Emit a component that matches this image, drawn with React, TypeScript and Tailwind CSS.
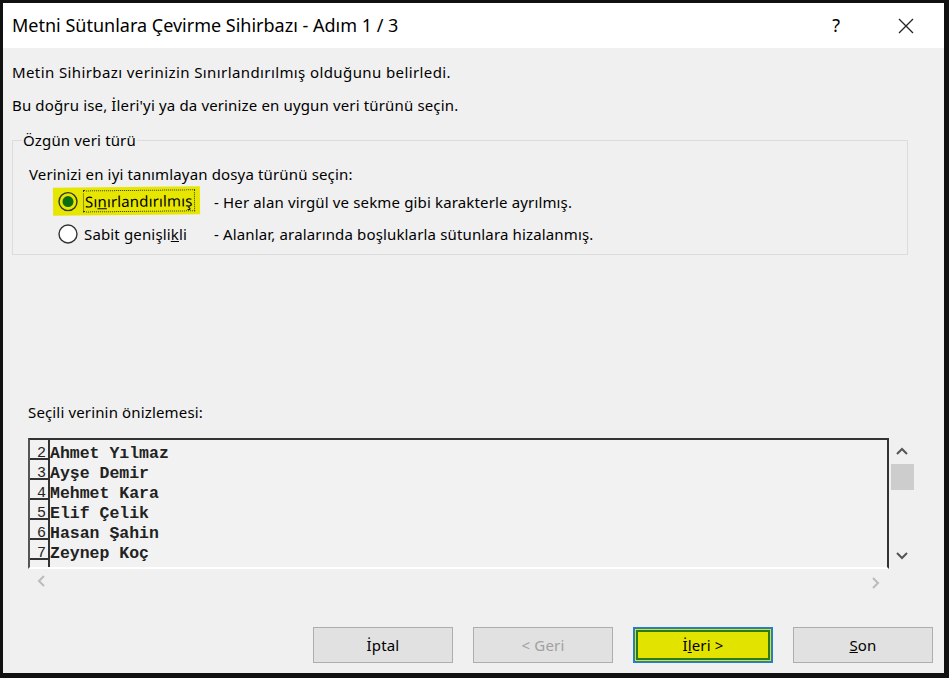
import React from "react";

const ui = { fontFamily: '"Noto Sans", "Open Sans", sans-serif' };
const mono = { fontFamily: '"Liberation Mono", "DejaVu Sans Mono", monospace' };

const rows = [
  { n: 2, name: "Ahmet Yılmaz" },
  { n: 3, name: "Ayşe Demir" },
  { n: 4, name: "Mehmet Kara" },
  { n: 5, name: "Elif Çelik" },
  { n: 6, name: "Hasan Şahin" },
  { n: 7, name: "Zeynep Koç" },
];

function Radio({ checked }: { checked?: boolean }) {
  return (
    <svg width="20" height="20" viewBox="0 0 20 20" className="shrink-0">
      <circle cx="10" cy="10" r="9" fill={checked ? "none" : "#fff"} stroke="#333" strokeWidth="1.4" />
      {checked && <circle cx="10" cy="10" r="5.5" fill="#0b6b12" />}
    </svg>
  );
}

function Chevron({ dir, color }: { dir: "up" | "down" | "left" | "right"; color: string }) {
  const d = {
    up: "M3 10 L8 5 L13 10",
    down: "M3 6 L8 11 L13 6",
    left: "M10 3 L5 8 L10 13",
    right: "M6 3 L11 8 L6 13",
  }[dir];
  return (
    <svg width="16" height="16" viewBox="0 0 16 16" className="shrink-0">
      <path d={d} fill="none" stroke={color} strokeWidth="2" />
    </svg>
  );
}

function Button({ children, disabled, focused }: { children: React.ReactNode; disabled?: boolean; focused?: boolean }) {
  if (focused) {
    return (
      <div className="w-[140px] h-[36px] shrink-0 bg-[#e3e300] border-2 border-[#1e7fd8] p-px">
        <div className="w-full h-full border-2 border-[#2c7a1a] flex items-center justify-center text-[15px] text-black">
          {children}
        </div>
      </div>
    );
  }
  return (
    <div
      className={`w-[140px] h-[36px] shrink-0 bg-[#e1e1e1] border border-[#adadad] flex items-center justify-center text-[15px] ${
        disabled ? "text-[#a0a0a0]" : "text-black"
      }`}
    >
      {children}
    </div>
  );
}

export default function App() {
  return (
    <div className="w-[949px] h-[678px] bg-[#111] pl-[3px] pt-[3px] pr-[5px] pb-[5px]" style={ui}>
      <div className="w-full h-full flex flex-col bg-[#f0f0f0]">
        {/* title bar */}
        <div className="h-[45px] bg-white flex items-center pl-[9px] text-[18px] text-black shrink-0">
          <span className="tracking-normal">Metni Sütunlara Çevirme Sihirbazı - Adım 1 / 3</span>
          <span className="ml-auto mr-[58px] text-[18px]">?</span>
          <svg width="16" height="16" viewBox="0 0 16 16" className="mr-[30px]">
            <path d="M1 1 L15 15 M15 1 L1 15" stroke="#222" strokeWidth="1.3" />
          </svg>
        </div>

        <div className="flex-1 flex flex-col pl-[9px] pr-[20px] text-[15px] tracking-[0.15px] text-black">
          <p className="mt-[13px] leading-[22px] tracking-[0.4px]">Metin Sihirbazı verinizin Sınırlandırılmış olduğunu belirledi.</p>
          <p className="mt-[11px] leading-[22px]">Bu doğru ise, İleri'yi ya da verinize en uygun veri türünü seçin.</p>

          {/* group box */}
          <div className="relative mt-[24px] mr-[16px] h-[115px] border border-[#dcdcdc] pl-[16px] pt-[22px]">
            <span className="absolute left-[9px] top-[-12px] bg-[#f0f0f0] px-px leading-[22px]">Özgün veri türü</span>
            <p className="leading-[22px]">Verinizi en iyi tanımlayan dosya türünü seçin:</p>
            <div className="flex items-center mt-[3px] h-[28px]">
              <div className="w-[161px] ml-[24px] shrink-0">
                <div className="inline-flex items-center bg-[#e6e600] h-[28px] pl-[5px] pr-[5px] -rotate-[0.6deg]">
                  <Radio checked />
                  <span className="ml-[5px] border border-dotted border-[#333] px-px leading-[20px]">
                    Sı<span className="underline">n</span>ırlandırılmış
                  </span>
                </div>
              </div>
              <span>- Her alan virgül ve sekme gibi karakterle ayrılmış.</span>
            </div>
            <div className="flex items-center mt-[4px] h-[28px]">
              <div className="w-[161px] ml-[24px] shrink-0 flex items-center pl-[5px]">
                <Radio />
                <span className="ml-[6px] leading-[20px]">
                  Sabit genişli<span className="underline">k</span>li
                </span>
              </div>
              <span>- Alanlar, aralarında boşluklarla sütunlara hizalanmış.</span>
            </div>
          </div>

          <p className="mt-[146px] ml-[16px] leading-[22px]">Seçili verinin önizlemesi:</p>

          {/* preview */}
          <div className="mt-[15px] ml-[16px] flex">
            <div className="w-[861px] h-[131px] shrink-0 border-t-2 border-l-2 border-t-[#333] border-l-[#555] border-r-2 border-r-[#333] border-b-2 border-b-white bg-[#f2f2f2] overflow-hidden">
              {[...rows, { n: 8, name: "" }].map((r) => (
                <div key={r.n} className="flex h-[20px]" style={mono}>
                  <div className="w-[20px] h-[20px] shrink-0 border-r-2 border-b-2 border-[#333] text-[15px] tracking-normal text-[#222] text-right pr-[2px] leading-[20px]">
                    <span className="relative top-[4px]">{r.name ? r.n : ""}</span>
                  </div>
                  <span className="relative top-[4px] text-[16.5px] font-bold tracking-normal text-[#222] leading-[20px] whitespace-pre">
                    {r.name}
                  </span>
                </div>
              ))}
            </div>
            <div className="w-[27px] shrink-0 flex flex-col pt-[6px]">
              <div className="ml-[5px]">
                <Chevron dir="up" color="#555" />
              </div>
              <div className="w-[23px] h-[26px] bg-[#cdcdcd] mt-[4px] ml-[2px]" />
              <div className="flex-1" />
              <div className="mb-[6px] ml-[5px]">
                <Chevron dir="down" color="#555" />
              </div>
            </div>
          </div>
          <div className="ml-[22px] w-[849px] flex justify-between mt-[4px]">
            <Chevron dir="left" color="#bbb" />
            <div className="mt-[2px]">
              <Chevron dir="right" color="#bbb" />
            </div>
          </div>

          <div className="mt-[36px] ml-[301px] flex gap-[20px]">
            <Button>İptal</Button>
            <Button disabled>&lt; Geri</Button>
            <Button focused>
              İ<span className="underline">l</span>eri &gt;
            </Button>
            <Button>
              <span className="underline">S</span>on
            </Button>
          </div>
        </div>
      </div>
    </div>
  );
}
